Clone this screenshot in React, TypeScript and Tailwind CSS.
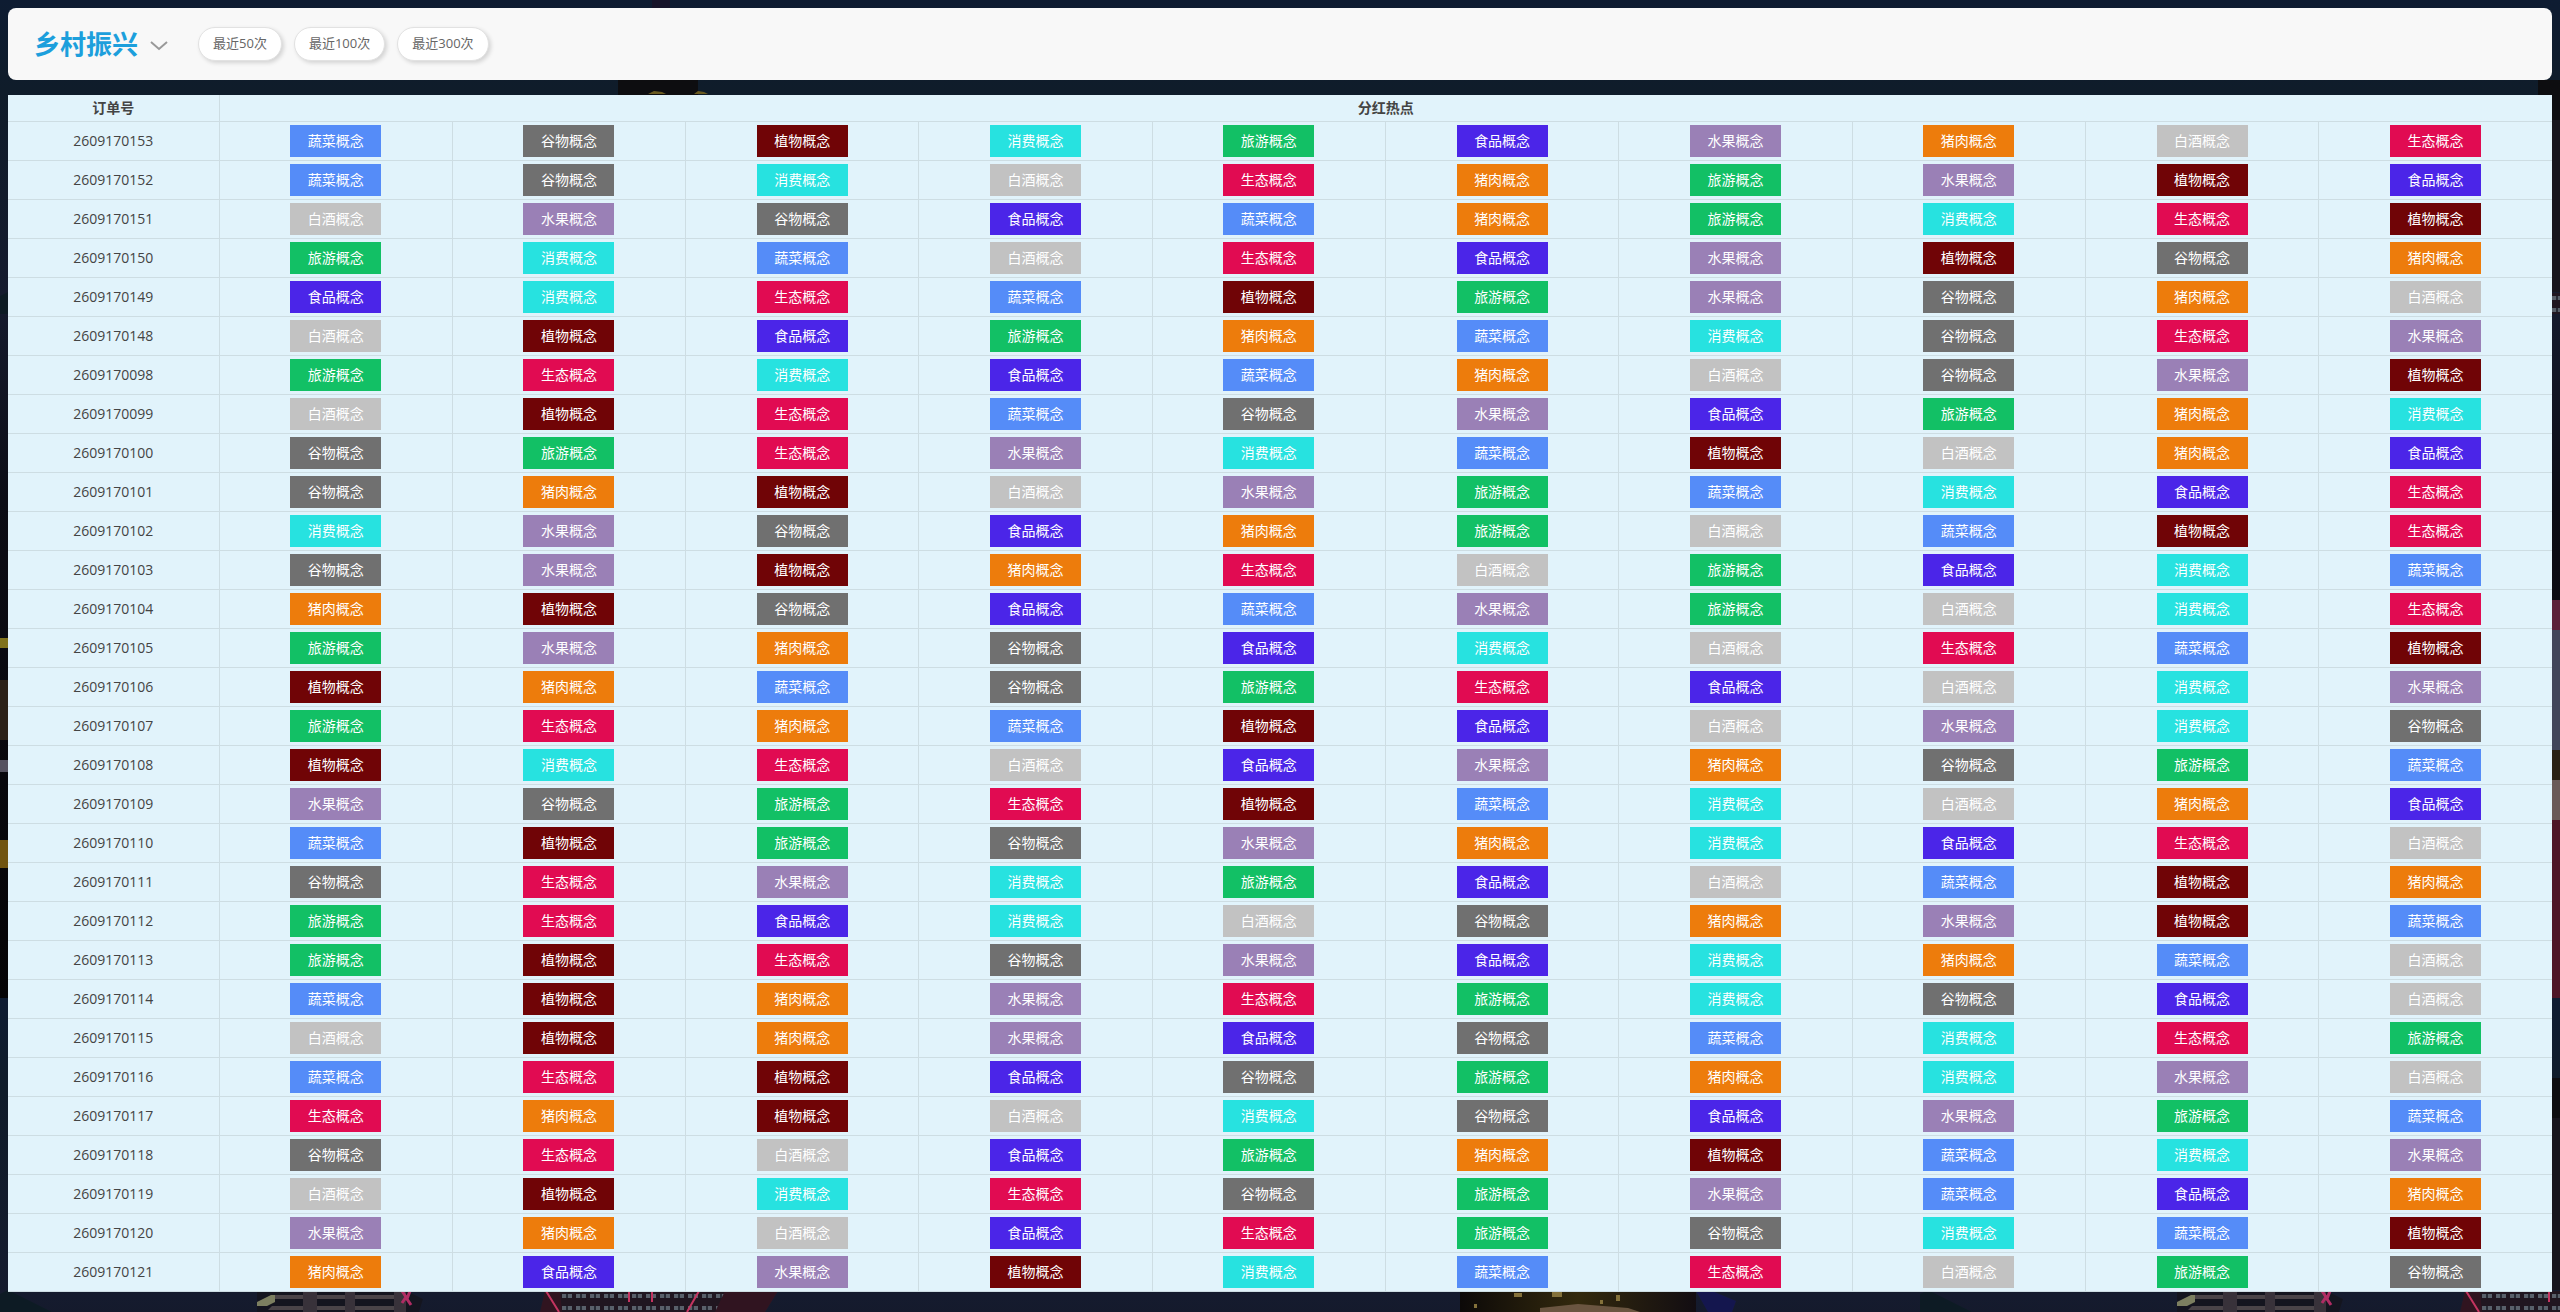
import { useState } from "react"
import clsx from "clsx"

const tags: Record<string, { label: string; color: string }> = {
  s: { label: "蔬菜概念", color: "bg-[#558cf8]" },
  g: { label: "谷物概念", color: "bg-[#707070]" },
  z: { label: "植物概念", color: "bg-[#700406]" },
  x: { label: "消费概念", color: "bg-[#27e2e0]" },
  l: { label: "旅游概念", color: "bg-[#12c065]" },
  p: { label: "食品概念", color: "bg-[#4b25e8]" },
  f: { label: "水果概念", color: "bg-[#9a80b6]" },
  r: { label: "猪肉概念", color: "bg-[#ed7c0c]" },
  b: { label: "白酒概念", color: "bg-[#c2c2c2]" },
  e: { label: "生态概念", color: "bg-[#e10b52]" },
}

// one letter per tag, ten per order
const orders = [
  { id: "2609170153", result: "sgzxlpfrbe" },
  { id: "2609170152", result: "sgxberlfzp" },
  { id: "2609170151", result: "bfgpsrlxez" },
  { id: "2609170150", result: "lxsbepfzgr" },
  { id: "2609170149", result: "pxeszlfgrb" },
  { id: "2609170148", result: "bzplrsxgef" },
  { id: "2609170098", result: "lexpsrbgfz" },
  { id: "2609170099", result: "bzesgfplrx" },
  { id: "2609170100", result: "glefxszbrp" },
  { id: "2609170101", result: "grzbflsxpe" },
  { id: "2609170102", result: "xfgprlbsze" },
  { id: "2609170103", result: "gfzreblpxs" },
  { id: "2609170104", result: "rzgpsflbxe" },
  { id: "2609170105", result: "lfrgpxbesz" },
  { id: "2609170106", result: "zrsglepbxf" },
  { id: "2609170107", result: "lerszpbfxg" },
  { id: "2609170108", result: "zxebpfrgls" },
  { id: "2609170109", result: "fglezsxbrp" },
  { id: "2609170110", result: "szlgfrxpeb" },
  { id: "2609170111", result: "gefxlpbszr" },
  { id: "2609170112", result: "lepxbgrfzs" },
  { id: "2609170113", result: "lzegfpxrsb" },
  { id: "2609170114", result: "szrfelxgpb" },
  { id: "2609170115", result: "bzrfpgsxel" },
  { id: "2609170116", result: "sezpglrxfb" },
  { id: "2609170117", result: "erzbxgpfls" },
  { id: "2609170118", result: "gebplrzsxf" },
  { id: "2609170119", result: "bzxeglfspr" },
  { id: "2609170120", result: "frbpelgxsz" },
  { id: "2609170121", result: "rpfzxseblg" },
]

const ranges = [50, 100, 300]

// Night skyline behind the page, tiled every 1920x998
function Skyline() {
  return (
    <svg className="absolute inset-0 -z-10 h-full w-full" aria-hidden="true">
      <defs>
        <linearGradient id="sky" x1="0" y1="0" x2="0" y2="1">
          <stop offset="0" stopColor="#0e1c32" />
          <stop offset="0.09" stopColor="#0f1c2a" />
          <stop offset="0.3" stopColor="#151b2e" />
          <stop offset="0.5" stopColor="#0c0d16" />
          <stop offset="1" stopColor="#050406" />
        </linearGradient>
        <linearGradient id="hall" x1="0" y1="0" x2="1" y2="0">
          <stop offset="0" stopColor="#0c0908" />
          <stop offset="0.5" stopColor="#33290d" />
          <stop offset="1" stopColor="#120d12" />
        </linearGradient>
        <pattern id="windows" width="14" height="12" patternUnits="userSpaceOnUse">
          <rect width="14" height="12" fill="#201620" />
          <rect x="2" y="8" width="10" height="4" fill="#59606a" />
          <rect x="6" y="8" width="2" height="4" fill="#262a34" />
        </pattern>
        <pattern id="city" width="1920" height="998" patternUnits="userSpaceOnUse">
          <rect width="1920" height="998" fill="url(#sky)" />
          <rect x="652" width="18" height="94" fill="#17142a" />
          <rect x="618" y="80" width="80" height="60" fill="#0d0d10" />
          <path d="M648 94l6-3 8 1 4 2zM694 94l4-3 6 1 4 2z" fill="#6a5a20" />
          <path d="M0 296l8-4 44 22H0z" fill="#0d1b24" />
          <path d="M257 293h150l16 8-4 13H257z" fill="#14151f" />
          <path d="M272 297h130v4H268zM272 308h130v4H268z" fill="#4a4448" />
          <path d="M303 293h14v21h-14zM345 293h10v21h-10zM394 293h12v21h-12z" fill="#38323a" />
          <path d="M257 304l14-7h4v7l-8 4h-10z" fill="#7c7f60" />
          <path d="M402 293l4 6-4 6M410 293l-3 8 4 6" stroke="#b02c63" strokeWidth="3" fill="none" />
          <path d="M545 293h233l-13 21H540z" fill="#301420" />
          <path d="M560 293h165l-10 21H562z" fill="url(#windows)" />
          <path d="M546 293l13 21M629 293v11M652 293v11M699 293l-12 21" stroke="#c43460" strokeWidth="2" />
          <path d="M1460 293h236v21h-236z" fill="url(#hall)" />
          <path d="M1540 310l38-4 50 4 12 4h-100z" fill="#6a5540" />
          <path d="M1474 306h3v4h-3zM1514 295h8v4h-8zM1552 294h10v5h-10zM1600 302h3v4h-3zM1616 297h4v6h-4z" fill="#84713a" />
          <path d="M1696 293h16l24 10-4 11h-24z" fill="#14164e" />
          <rect y="638" width="8" height="10" fill="#80721c" />
          <rect y="680" width="8" height="60" fill="#2b2118" />
          <rect y="760" width="8" height="12" fill="#555260" />
          <rect y="840" width="8" height="28" fill="#705410" />
          <rect x="632" y="120" width="8" height="172" fill="#17151d" />
          <rect x="632" y="600" width="8" height="30" fill="#5b2039" />
          <rect x="632" y="630" width="8" height="120" fill="#41465a" />
          <rect x="632" y="750" width="8" height="30" fill="#2a2214" />
          <rect x="632" y="780" width="8" height="40" fill="#6a5a58" />
          <rect x="632" y="820" width="8" height="178" fill="#4e1527" />
        </pattern>
      </defs>
      <rect width="100%" height="100%" fill="url(#city)" />
    </svg>
  )
}

export default function App() {
  const [range, setRange] = useState(50)

  return (
    <div className="relative isolate min-h-screen overflow-hidden bg-[#151b2e] px-2 pt-2 pb-5 font-['Open_Sans','Noto_Sans_CJK_SC',sans-serif] text-[#444]">
      <Skyline />

      {/* Header */}
      <header className="flex h-18 items-center rounded-lg bg-[#f8f8f8] px-[26px]">
        <button type="button" className="mr-[30px] flex cursor-pointer items-center gap-3">
          <h1 className="text-[26px] leading-10 font-bold text-[#1c9fdc]">乡村振兴</h1>
          <svg className="h-5 w-[18px]" viewBox="0 0 18 20" fill="none" stroke="#999" strokeWidth="2" aria-hidden="true">
            <path d="M1 8l8 7 8-7" />
          </svg>
        </button>
        <div className="flex gap-3">
          {ranges.map((count) => (
            <button
              key={count}
              type="button"
              aria-pressed={range === count}
              onClick={() => setRange(count)}
              className="h-[34px] cursor-pointer rounded-full border border-[#e2e2e2] bg-white px-3.5 text-[13px] text-[#666] shadow-[2px_2px_4px_rgba(0,0,0,0.15)]"
            >
              最近{count}次
            </button>
          ))}
        </div>
      </header>

      {/* Orders */}
      <table className="mt-[15px] w-full table-fixed border-collapse bg-[#e1f3fb] text-center">
        <colgroup>
          <col className="w-[211px]" />
          <col span={10} />
        </colgroup>
        <thead>
          <tr className="h-[26px] border-b border-[#cddde3] text-sm">
            <th className="border-r border-[#cddde3] p-0 font-bold">订单号</th>
            <th colSpan={10} className="p-0 font-bold">
              分红热点
            </th>
          </tr>
        </thead>
        <tbody>
          {orders.map((order) => (
            <tr key={order.id} className="h-[39px] border-b border-[#cddde3]">
              <td className="border-r border-[#cddde3] p-0 text-sm">{order.id}</td>
              {order.result.split("").map((key) => (
                <td key={key} className="border-r border-[#cddde3] p-0 last:border-r-0">
                  <span className={clsx("mx-auto block w-[91px] text-sm leading-8 text-white", tags[key].color)}>
                    {tags[key].label}
                  </span>
                </td>
              ))}
            </tr>
          ))}
        </tbody>
      </table>
    </div>
  )
}
